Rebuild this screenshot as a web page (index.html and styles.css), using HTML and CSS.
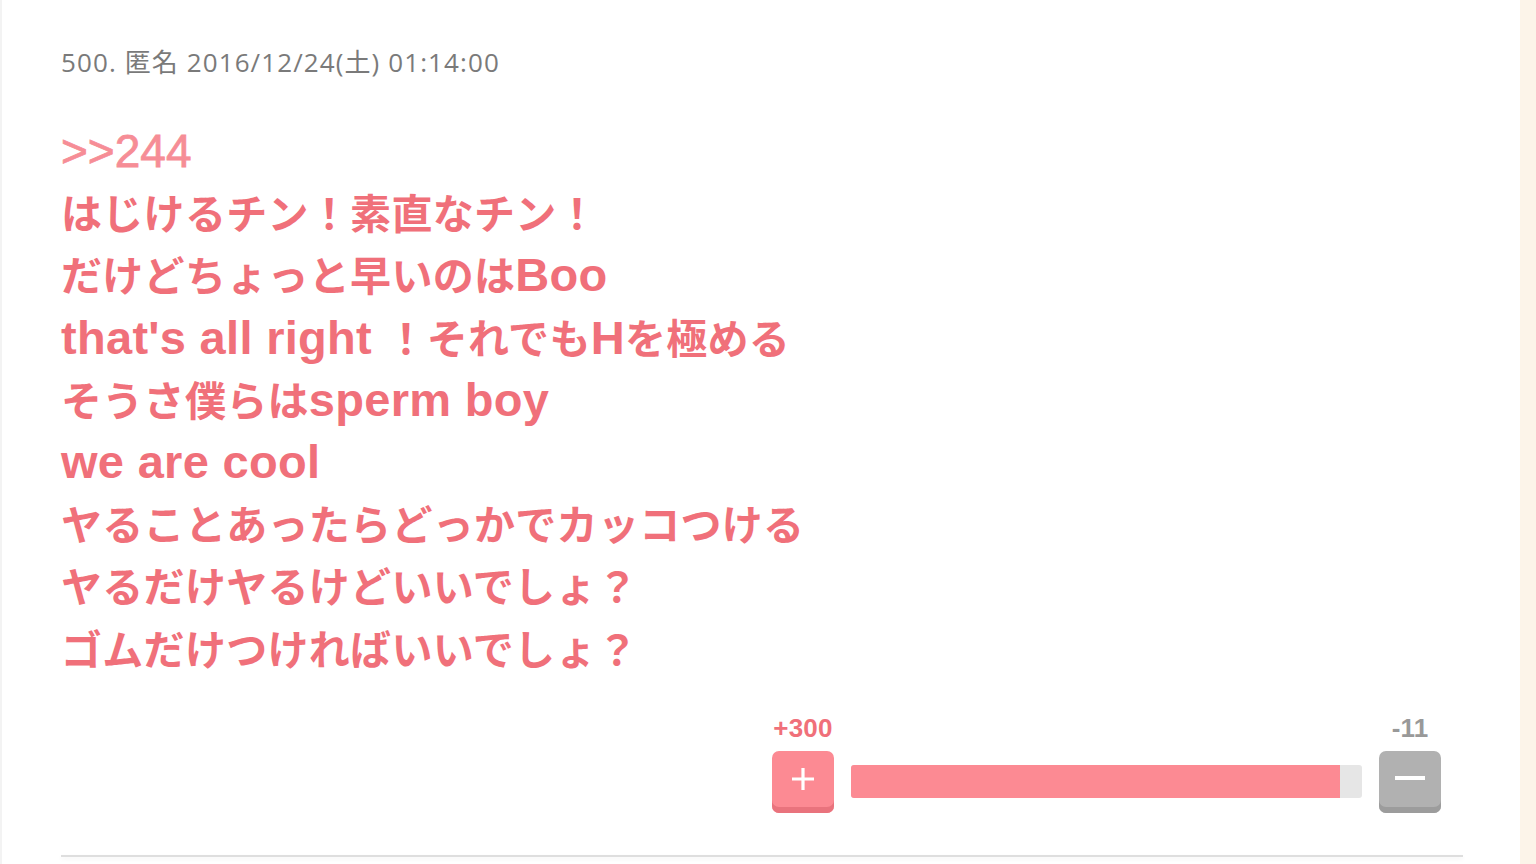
FILE: index.html
```html
<!DOCTYPE html>
<html lang="ja">
<head>
<meta charset="utf-8">
<title>500</title>
<link rel="stylesheet" href="styles.css">
</head>
<body>
<div class="page">
  <article class="post">
    <div class="meta">500. 匿名 2016/12/24(土) 01:14:00</div>
    <div class="body">
      <div class="anchor">&gt;&gt;244</div>
      <div class="line">はじけるチン！素直なチン！</div>
      <div class="line">だけどちょっと早いのは<span class="en">Boo</span></div>
      <div class="line"><span class="en">that's all right </span>！それでも<span class="en">H</span>を極める</div>
      <div class="line">そうさ僕らは<span class="en">sperm boy</span></div>
      <div class="line"><span class="en">we are cool</span></div>
      <div class="line">ヤることあったらどっかでカッコつける</div>
      <div class="line">ヤるだけヤるけどいいでしょ？</div>
      <div class="line">ゴムだけつければいいでしょ？</div>
    </div>
    <div class="vote">
      <div class="count plus-count">+300</div>
      <div></div>
      <div class="count minus-count">-11</div>
      <button class="btn plus" aria-label="plus">
        <svg width="26" height="26" viewBox="0 0 26 26"><path d="M13 2v22M2 13h22" stroke="#fff" stroke-width="3.2" fill="none"/></svg>
      </button>
      <div class="bar"><div class="fill" style="width:95.7%"></div></div>
      <button class="btn minus" aria-label="minus">
        <svg width="32" height="26" viewBox="0 0 32 26"><path d="M1 12h30" stroke="#fff" stroke-width="4" fill="none"/></svg>
      </button>
    </div>
    <div class="rule"></div>
  </article>
</div>
</body>
</html>
```

FILE: styles.css
```css
html, body {
  margin: 0;
  padding: 0;
}
body {
  background: #fcf4e9;
  font-family: "Open Sans", "Noto Sans CJK JP", sans-serif;
}
.page {
  width: 1518px;
  min-height: 864px;
  background: #fff;
  border-left: 2px solid #f3f3f3;
}
.post {
  padding: 45px 57px 0 59px;
}
.meta {
  font-size: 26px;
  line-height: 34px;
  color: #7a7a7a;
  font-weight: 400;
  letter-spacing: 1.1px;
}
.body {
  margin-top: 41px;
  color: #f0707a;
  font-size: 41px;
  line-height: 62.2px;
  font-weight: 700;
}
.line {
  letter-spacing: 0.3px;
  height: 62.2px;
}
.en {
  font-family: "Liberation Sans", Arial, sans-serif;
  font-size: 47px;
  line-height: 1;
  letter-spacing: 0.3px;
}
.anchor {
  color: #f68d96;
  font-family: "Liberation Sans", Arial, sans-serif;
  font-weight: 400;
  font-size: 46px;
  height: 62.2px;
  -webkit-text-stroke: 0.8px #f68d96;
}
.vote {
  margin: 33px 22px 0 auto;
  width: 669px;
  display: grid;
  grid-template-columns: 62px 1fr 62px;
  column-gap: 17px;
  row-gap: 8px;
  align-items: center;
}
.count {
  text-align: center;
  font-family: "Liberation Sans", Arial, sans-serif;
  font-size: 26px;
  line-height: 30px;
  font-weight: 700;
  letter-spacing: 0.2px;
}
.plus-count {
  color: #f0707a;
}
.minus-count {
  color: #999;
}
.btn {
  width: 62px;
  height: 62px;
  border: none;
  border-radius: 7px;
  padding: 0 0 5px;
  display: flex;
  align-items: center;
  justify-content: center;
  cursor: pointer;
}
.plus {
  background: #fc8a93;
  box-shadow: inset 0 -6px 0 #e9737d;
}
.minus {
  background: #b1b1b1;
  box-shadow: inset 0 -6px 0 #9c9c9c;
}
.bar {
  height: 33px;
  background: #e6e6e6;
  border-radius: 3px;
  overflow: hidden;
  margin-top: -1px;
}
.fill {
  height: 100%;
  background: #fc8a93;
}
.rule {
  margin: 42px 0 0 0;
  height: 2px;
  background: #dedede;
  box-shadow: 0 2px 4px rgba(0,0,0,0.06);
}
```
